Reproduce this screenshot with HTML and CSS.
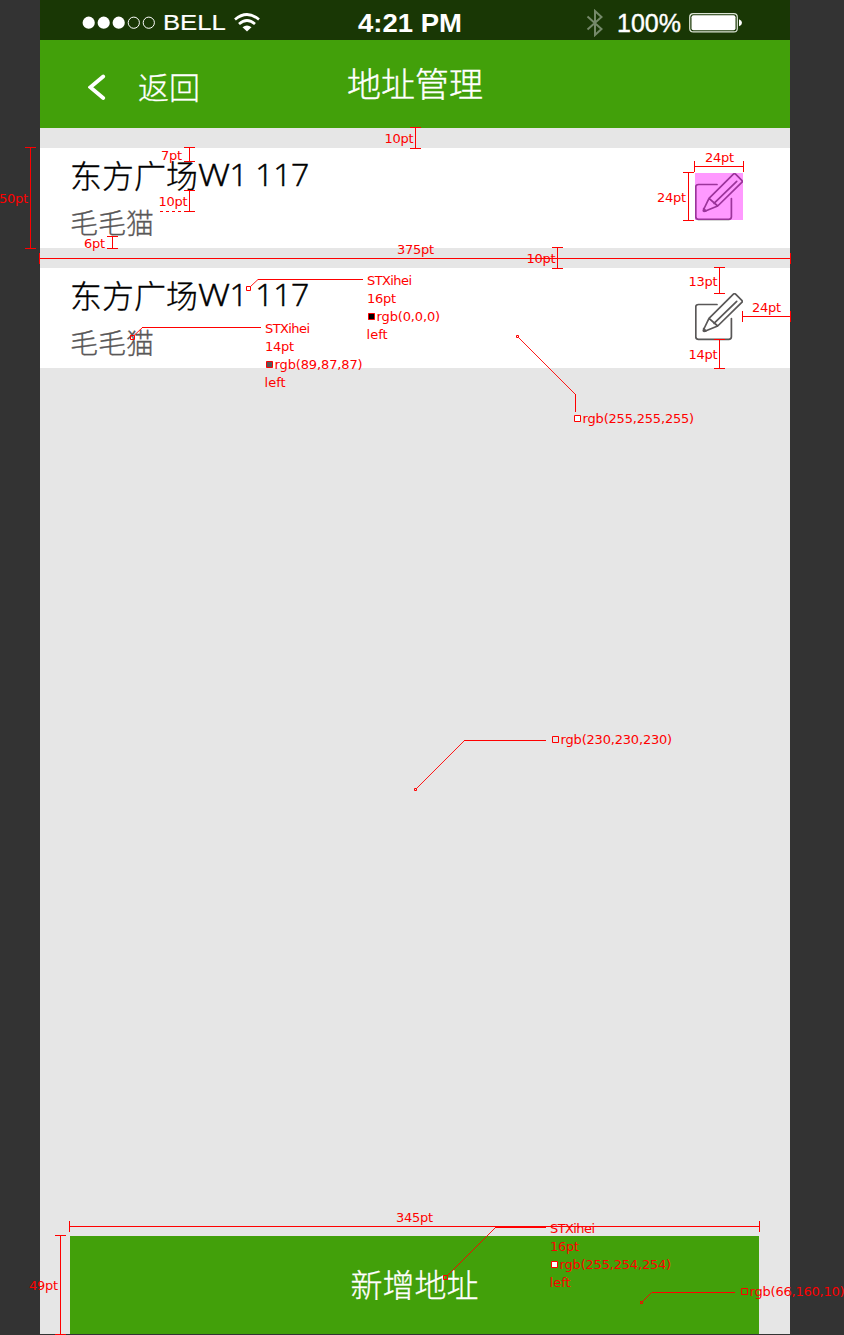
FILE: index.html
```html
<!DOCTYPE html>
<html lang="zh-CN">
<head>
<meta charset="utf-8">
<title>地址管理</title>
<link rel="stylesheet" href="styles.css">
</head>
<body>
<div class="board">
  <main class="phone">
    <div class="status">
      <svg class="signal" width="76" height="14" viewBox="0 0 76 14"><g fill="#fff"><circle cx="6.7" cy="6.7" r="6.1"/><circle cx="21.7" cy="6.7" r="6.1"/><circle cx="36.7" cy="6.7" r="6.1"/></g><g fill="none" stroke="#fff"><circle cx="51.8" cy="6.7" r="5.6"/><circle cx="66.8" cy="6.7" r="5.6"/></g></svg>
      <span class="carrier">BELL</span>
      <svg class="wifi" width="26" height="19" viewBox="0 0 26 19"><g fill="none" stroke="#fff" stroke-width="2.7"><path d="M1 6.5Q13-3.5 25 6.5"/><path d="M5 11Q13 4 21 11"/></g><path d="M8.5 14.3Q13 10.5 17.5 14.3L13 18.6Z" fill="#fff"/></svg>
      <span class="time">4:21 PM</span>
      <svg class="bluetooth" width="18" height="28" viewBox="0 0 18 28"><path d="M1.5 7.5L15.5 20L9 26V2L15.5 8L1.5 20.5" fill="none" stroke="#75896a" stroke-width="2"/></svg>
      <span class="percent">100%</span>
      <svg class="battery" width="54" height="20" viewBox="0 0 54 20"><rect x=".7" y=".7" width="47.6" height="18.2" rx="3.5" fill="none" stroke="#dce5d6" stroke-width="1.2"/><rect x="2.5" y="2.3" width="44" height="15" rx="2" fill="#fff"/><path d="M50 6.3Q53 7.5 53 9.8T50 13.3Z" fill="#fff"/></svg>
    </div>
    <header class="nav">
      <svg class="chevron" width="18" height="26" viewBox="0 0 18 26"><path d="M15.2 2.5L2.3 13.3L15.2 24" fill="none" stroke="#fff" stroke-width="3.8" stroke-linecap="round"/></svg>
      <span class="back">返回</span>
      <h1 class="title">地址管理</h1>
    </header>
    <section class="list">
      <article class="card">
        <div class="info"><p class="address">东方广场<span class="latin"><span class="wide">W</span>1 117</span></p><p class="name">毛毛猫</p></div>
        <div class="edit selected"><svg width="48" height="48" viewBox="0 0 48 48"><g class="pen"><path d="M22 11.5H3.5Q.8 11.5.8 14V43.7Q.8 46.3 3.5 46.3H33.7Q36.4 46.3 36.4 43.7V25.5"/><path d="M14 25.3L38.4 1.2Q39.5.2 40.6 1.2L46.8 7.3Q47.8 8.4 46.8 9.4L22.7 33L9.8 38.3Q8 38.8 8.4 37ZM14 25.3L22.7 33M19 30.3L41.7 8.3M8.7 35.5L11 38"/></g></svg></div>
      </article>
      <article class="card">
        <div class="info"><p class="address">东方广场<span class="latin"><span class="wide">W</span>1 117</span></p><p class="name">毛毛猫</p></div>
        <div class="edit"><svg width="48" height="48" viewBox="0 0 48 48"><g class="pen"><path d="M22 11.5H3.5Q.8 11.5.8 14V43.7Q.8 46.3 3.5 46.3H33.7Q36.4 46.3 36.4 43.7V25.5"/><path d="M14 25.3L38.4 1.2Q39.5.2 40.6 1.2L46.8 7.3Q47.8 8.4 46.8 9.4L22.7 33L9.8 38.3Q8 38.8 8.4 37ZM14 25.3L22.7 33M19 30.3L41.7 8.3M8.7 35.5L11 38"/></g></svg></div>
      </article>
    </section>
    <button class="add">新增地址</button>
  </main>
  <svg class="notes" width="844" height="1335" viewBox="0 0 844 1335">
    <g class="rule">
      <path d="M415.5 127V149M410 127.5H421M410 148.5H421"/>
      <path d="M189.5 147V162M184 147.5H195M184 161.5H195"/>
      <path d="M189.5 190V212M184 190.5H195M184 211.5H195"/>
      <path d="M160 211.5H184" stroke-dasharray="3 3"/>
      <path d="M30.5 147V249M25 147.5H36M25 248.5H36"/>
      <path d="M112.5 236V249M107 236.5H118M107 248.5H118"/>
      <path d="M39 258.5H791M39.5 253V264M790.5 253V264"/>
      <path d="M694 166.5H744M694.5 161V172M743.5 161V172"/>
      <path d="M688.5 172V221M683 172.5H694M683 220.5H694"/>
      <path d="M719.5 267V294M714 267.5H725M714 293.5H725"/>
      <path d="M719.5 339V369M714 339.5H725M714 368.5H725"/>
      <path d="M742 316.5H791M742.5 311V322M790.5 311V322"/>
      <path d="M557.5 247V269M552 247.5H563M552 268.5H563"/>
      <path d="M69 1226.5H760M69.5 1221V1232M759.5 1221V1232"/>
      <path d="M60.5 1235V1335M55 1235.5H66M55 1334.5H66"/>
    </g>
    <g class="rule">
      <path d="M258 279.5H363M142 327.5H261M575.5 394V412M464 740.5H546M495 1227.5H546M652 1292.5H735"/>
      <path class="slant" d="M250.5 286.5L258 279.5M134 335.5L142.5 327.5M518.5 337.5L575.5 394.5M416.5 788.5L464.5 740.5M447.5 1275.5L495.5 1227.5M642.5 1301.5L651.5 1292.5"/>
      <path d="M246.5 286.5h4v4h-4zM130.5 335.5h4v4h-4zM516.5 335.5h2v2h-2zM414.5 788.5h2v2h-2zM443.5 1275.5h4v4h-4zM640.5 1301.5h2v2h-2z"/>
      <path fill="#000" d="M368.5 313.5h6v6h-6z"/>
      <path fill="#595757" d="M266.5 361.5h6v6h-6z"/>
      <path fill="#fff" d="M574.5 415.5h6v6h-6zM551.5 1261.5h6v6h-6z"/>
      <path fill="#e6e6e6" d="M552.5 736.5h6v6h-6z"/>
      <path fill="#42a00a" d="M741.5 1288.5h6v6h-6z"/>
    </g>
    <g class="label">
      <text x="384.5" y="143" textLength="29">10pt</text>
      <text x="161" y="160" textLength="21">7pt</text>
      <text x="158.5" y="206" textLength="29">10pt</text>
      <text x="-1" y="203" textLength="29">50pt</text>
      <text x="84" y="248" textLength="21">6pt</text>
      <text x="705" y="162" textLength="29">24pt</text>
      <text x="657" y="202" textLength="29">24pt</text>
      <text x="688.5" y="286" textLength="29">13pt</text>
      <text x="752" y="312" textLength="29">24pt</text>
      <text x="688.5" y="359" textLength="29">14pt</text>
      <text x="397" y="254" textLength="37">375pt</text>
      <text x="526.5" y="263" textLength="29">10pt</text>
      <text x="367" y="285" textLength="45">STXihei</text>
      <text x="367" y="303" textLength="29">16pt</text>
      <text x="376.6" y="321" textLength="63.6">rgb(0,0,0)</text>
      <text x="366.6" y="339" textLength="21">left</text>
      <text x="265" y="333" textLength="45">STXihei</text>
      <text x="265" y="351" textLength="29">14pt</text>
      <text x="274.6" y="369" textLength="88">rgb(89,87,87)</text>
      <text x="264.6" y="387" textLength="21">left</text>
      <text x="582.6" y="423" textLength="111.6">rgb(255,255,255)</text>
      <text x="560.6" y="744" textLength="111.6">rgb(230,230,230)</text>
      <text x="396" y="1222" textLength="37">345pt</text>
      <text x="29" y="1290" textLength="29">49pt</text>
      <text x="550" y="1233" textLength="45">STXihei</text>
      <text x="550" y="1251" textLength="29">16pt</text>
      <text x="559.6" y="1269" textLength="111.6">rgb(255,254,254)</text>
      <text x="549.6" y="1287" textLength="21">left</text>
      <text x="749.6" y="1296" textLength="95">rgb(66,160,10)</text>
    </g>
  </svg>
</div>
</body>
</html>
```
FILE: styles.css
```css
* { box-sizing: border-box; }
body { margin: 0; background: #333; overflow: hidden; font-family: "Liberation Sans", "Noto Sans CJK SC", sans-serif; }
.board { position: relative; width: 844px; height: 1335px; }
.phone { display: flex; flex-direction: column; width: 750px; height: 1334px; margin-left: 40px; background: #e6e6e6; }
.status { display: flex; align-items: center; height: 40px; padding: 5px 0 0 42px; background: #193705; color: #fff; white-space: nowrap; }
.signal { width: 76px; }
.carrier { width: 62px; margin-left: 5px; font-size: 22.5px; transform: scaleX(1.14); transform-origin: left; -webkit-text-stroke: .2px #fff; }
.wifi { margin-left: 9px; }
.time { width: 104px; margin-left: 98px; font-size: 25px; font-weight: 700; transform: translateY(1px) scaleX(1.1); transform-origin: left; }
.bluetooth { margin-left: 124px; }
.percent { width: 65px; margin-left: 12px; font-size: 25px; -webkit-text-stroke: .4px #fff; transform: translate(1px, 1px); }
.battery { margin-left: 8px; }
.nav { display: flex; align-items: center; height: 88px; padding: 6px 0 0 48px; background: #42a00a; color: #fff; }
.back { width: 64px; margin: -3px 0 0 31px; font: 300 31px/40px "Noto Sans CJK SC", sans-serif; -webkit-text-stroke: .3px; transform: translateX(1px); }
.title { margin: -8px 0 0 146px; font: 300 34px/44px "Noto Sans CJK SC", sans-serif; -webkit-text-stroke: .4px; }
.list { display: flex; flex-direction: column; gap: 20px; padding-top: 20px; }
.card { display: flex; justify-content: space-between; height: 100px; padding: 0 47px 0 30px; background: #fff; }
.info { padding-top: 6px; }
.address, .name { margin: 0; font-family: "Noto Sans CJK SC", sans-serif; font-weight: 300; white-space: nowrap; -webkit-text-stroke: .3px; }
.address { height: 46px; color: #000; font-size: 32px; line-height: 40px; }
.latin { display: inline-block; font-family: "Open Sans", sans-serif; font-size: 32px; font-weight: 300; line-height: 1; letter-spacing: -.4px; transform: translateY(-2px); -webkit-text-stroke: .5px; }
.wide { display: inline-block; width: 31.5px; transform: scaleX(1.12); transform-origin: left; }
.name { color: #595757; font-size: 28px; line-height: 44px; }
.edit { height: 47px; margin-top: 25px; position: relative; }
.edit svg { display: block; }
.selected::after { content: ""; position: absolute; inset: 0; background: rgba(255, 0, 255, .4); }
.pen { fill: none; stroke: #595757; stroke-width: 1.7; stroke-linejoin: round; stroke-linecap: round; }
.add { width: 689px; height: 98px; margin: auto 0 0 30px; padding: 0 0 5px; border: 0; background: #42a00a; color: #fffefe; font: 300 32px/40px "Noto Sans CJK SC", sans-serif; -webkit-text-stroke: .3px; }
.notes { position: absolute; inset: 0; }
.rule { fill: none; stroke: #f00; stroke-width: 1; }
.slant { stroke-width: .9; }
.label { fill: #f00; font: 13px "DejaVu Sans", sans-serif; }
```
